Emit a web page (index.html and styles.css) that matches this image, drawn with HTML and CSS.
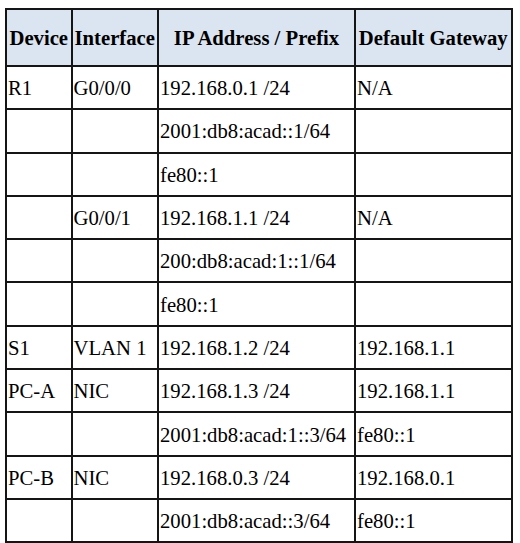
FILE: index.html
```html
<!DOCTYPE html>
<html>
<head>
<meta charset="utf-8">
<link rel="stylesheet" href="styles.css">
</head>
<body>
<table class="addr-table">
  <colgroup>
    <col class="c-device">
    <col class="c-iface">
    <col class="c-ip">
    <col class="c-gw">
  </colgroup>
  <thead>
    <tr>
      <th>Device</th>
      <th>Interface</th>
      <th>IP Address / Prefix</th>
      <th>Default Gateway</th>
    </tr>
  </thead>
  <tbody>
    <tr><td>R1</td><td>G0/0/0</td><td>192.168.0.1 /24</td><td>N/A</td></tr>
    <tr><td></td><td></td><td>2001:db8:acad::1/64</td><td></td></tr>
    <tr><td></td><td></td><td>fe80::1</td><td></td></tr>
    <tr><td></td><td>G0/0/1</td><td>192.168.1.1 /24</td><td>N/A</td></tr>
    <tr><td></td><td></td><td>200:db8:acad:1::1/64</td><td></td></tr>
    <tr><td></td><td></td><td>fe80::1</td><td></td></tr>
    <tr><td>S1</td><td>VLAN 1</td><td>192.168.1.2 /24</td><td>192.168.1.1</td></tr>
    <tr><td>PC-A</td><td>NIC</td><td>192.168.1.3 /24</td><td>192.168.1.1</td></tr>
    <tr><td></td><td></td><td>2001:db8:acad:1::3/64</td><td>fe80::1</td></tr>
    <tr><td>PC-B</td><td>NIC</td><td>192.168.0.3 /24</td><td>192.168.0.1</td></tr>
    <tr><td></td><td></td><td>2001:db8:acad::3/64</td><td>fe80::1</td></tr>
  </tbody>
</table>
</body>
</html>
```

FILE: styles.css
```css
html, body {
  margin: 0;
  padding: 0;
  background: #ffffff;
}

body {
  font-family: "Liberation Serif", "Times New Roman", serif;
  font-size: 20.7px;
  color: #000;
}

.addr-table {
  border-collapse: collapse;
  table-layout: fixed;
  margin: 8px 0 0 5px;
  width: 505.5px;
}

.c-device { width: 65.5px; }
.c-iface { width: 86.5px; }
.c-ip { width: 197px; }
.c-gw { width: 156.5px; }

.addr-table th,
.addr-table td {
  border: 2px solid #151515;
  white-space: nowrap;
  overflow: hidden;
  line-height: normal;
  box-sizing: border-box;
}

.addr-table th {
  background: #dbe5f1;
  font-weight: bold;
  text-align: center;
  vertical-align: top;
  height: 57px;
  padding: 17px 0 0 0;
}

.addr-table td {
  text-align: left;
  vertical-align: middle;
  height: 43.3px;
  padding: 2px 1px 0 1px;
}
```
